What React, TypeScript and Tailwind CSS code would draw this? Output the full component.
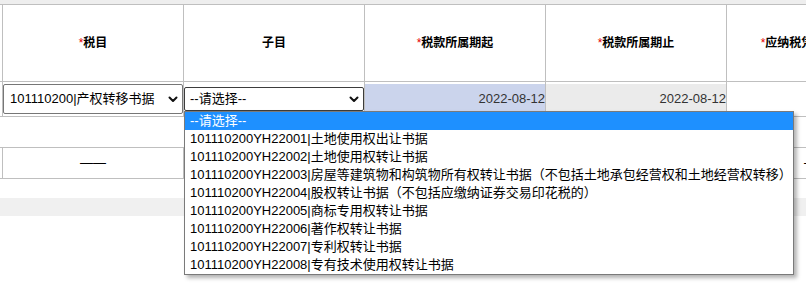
const options = [
  '--请选择--',
  '101110200YH22001|土地使用权出让书据',
  '101110200YH22002|土地使用权转让书据',
  '101110200YH22003|房屋等建筑物和构筑物所有权转让书据（不包括土地承包经营权和土地经营权转移）',
  '101110200YH22004|股权转让书据（不包括应缴纳证券交易印花税的）',
  '101110200YH22005|商标专用权转让书据',
  '101110200YH22006|著作权转让书据',
  '101110200YH22007|专利权转让书据',
  '101110200YH22008|专有技术使用权转让书据',
];

function Chevron() {
  return (
    <svg width="10" height="7" viewBox="0 0 10 7" fill="none" stroke="#111" strokeWidth="2" strokeLinecap="round" strokeLinejoin="round">
      <polyline points="1.5,1.5 5,5 8.5,1.5" />
    </svg>
  );
}

function HeadCell({ label, required, first }: { label: string; required?: boolean; first?: boolean }) {
  return (
    <div
      className={`shrink-0 h-[76px] flex items-center justify-center border-r border-[#bfbfbf] whitespace-nowrap text-[12px] font-bold text-black ${first ? 'w-[182px] border-l' : 'w-[181px]'}`}
    >
      {required && <span className="text-[#e60000] font-normal">*</span>}
      {label}
    </div>
  );
}

export default function App() {
  return (
    <div className="relative w-[806px] h-[291px] overflow-hidden bg-white font-['Liberation_Sans','Noto_Sans_CJK_SC',sans-serif]">
      <div className="h-[4px] bg-[#eeeeee]" />

      {/* Header */}
      <div className="flex w-max border-t border-b border-[#bfbfbf]">
        <div className="w-[2px] shrink-0" />
        <HeadCell label="税目" required first />
        <HeadCell label="子目" />
        <HeadCell label="税款所属期起" required />
        <HeadCell label="税款所属期止" required />
        <HeadCell label="应纳税凭证书立日期" required />
      </div>

      {/* Row 1 */}
      <div className="flex w-max h-[35px] border-b border-[#bfbfbf]">
        <div className="w-[2px] shrink-0" />
        <div className="w-[182px] shrink-0 border-l border-r border-[#bfbfbf]">
          <div className="mt-[2px] h-[30px] flex items-center justify-between pl-[6px] pr-[4px] border border-[#767676] rounded-[2px] bg-white text-[13px] text-black whitespace-nowrap">
            <span>101110200|产权转移书据</span>
            <Chevron />
          </div>
        </div>
        <div className="w-[181px] shrink-0 border-r border-[#bfbfbf]">
          <div className="mt-[5px] h-[24px] flex items-center justify-between pl-[5px] pr-[4px] border border-[#3c3c3c] rounded-[2px] bg-white text-[13px] text-black whitespace-nowrap">
            <span>--请选择--</span>
            <Chevron />
          </div>
        </div>
        <div className="w-[181px] shrink-0 border-r border-[#bfbfbf]">
          <div className="mt-[2px] h-[30px] flex items-center justify-end bg-[#cbd4ec] text-[13px] text-[#333]">2022-08-12</div>
        </div>
        <div className="w-[181px] shrink-0 border-r border-[#bfbfbf]">
          <div className="mt-[2px] h-[30px] flex items-center justify-end bg-[#ebebeb] text-[13px] text-[#333]">2022-08-12</div>
        </div>
        <div className="w-[181px] shrink-0 border-r border-[#bfbfbf]" />
      </div>

      {/* Row 2 */}
      <div className="h-[31px] w-full border-b border-[#bfbfbf]" />

      {/* Row 3 */}
      <div className="flex w-max h-[31px] border-b border-[#bfbfbf] text-[13px] text-black">
        <div className="w-[2px] shrink-0" />
        <div className="w-[182px] shrink-0 flex items-center justify-center border-l border-r border-[#bfbfbf]">——</div>
        <div className="w-[181px] shrink-0 border-r border-[#bfbfbf]" />
        <div className="w-[181px] shrink-0 border-r border-[#bfbfbf]" />
        <div className="w-[181px] shrink-0 border-r border-[#bfbfbf]" />
        <div className="w-[181px] shrink-0 flex items-center justify-center border-r border-[#bfbfbf]">——</div>
      </div>

      <div className="h-[19px]" />
      <div className="h-[18px] bg-[#f0f0f0]" />

      {/* Open dropdown list */}
      <div className="absolute left-[184px] top-[111px] w-[610px] border border-[#7a7a7a] bg-white shadow-[3px_3px_4px_rgba(0,0,0,0.3)]">
        {options.map((o, i) => (
          <div
            key={o}
            className={`h-[18px] leading-[18px] pl-[5px] text-[13px] whitespace-nowrap ${i === 0 ? 'bg-[#1e90ff] text-white' : 'text-black'}`}
          >
            {o}
          </div>
        ))}
      </div>
    </div>
  );
}
